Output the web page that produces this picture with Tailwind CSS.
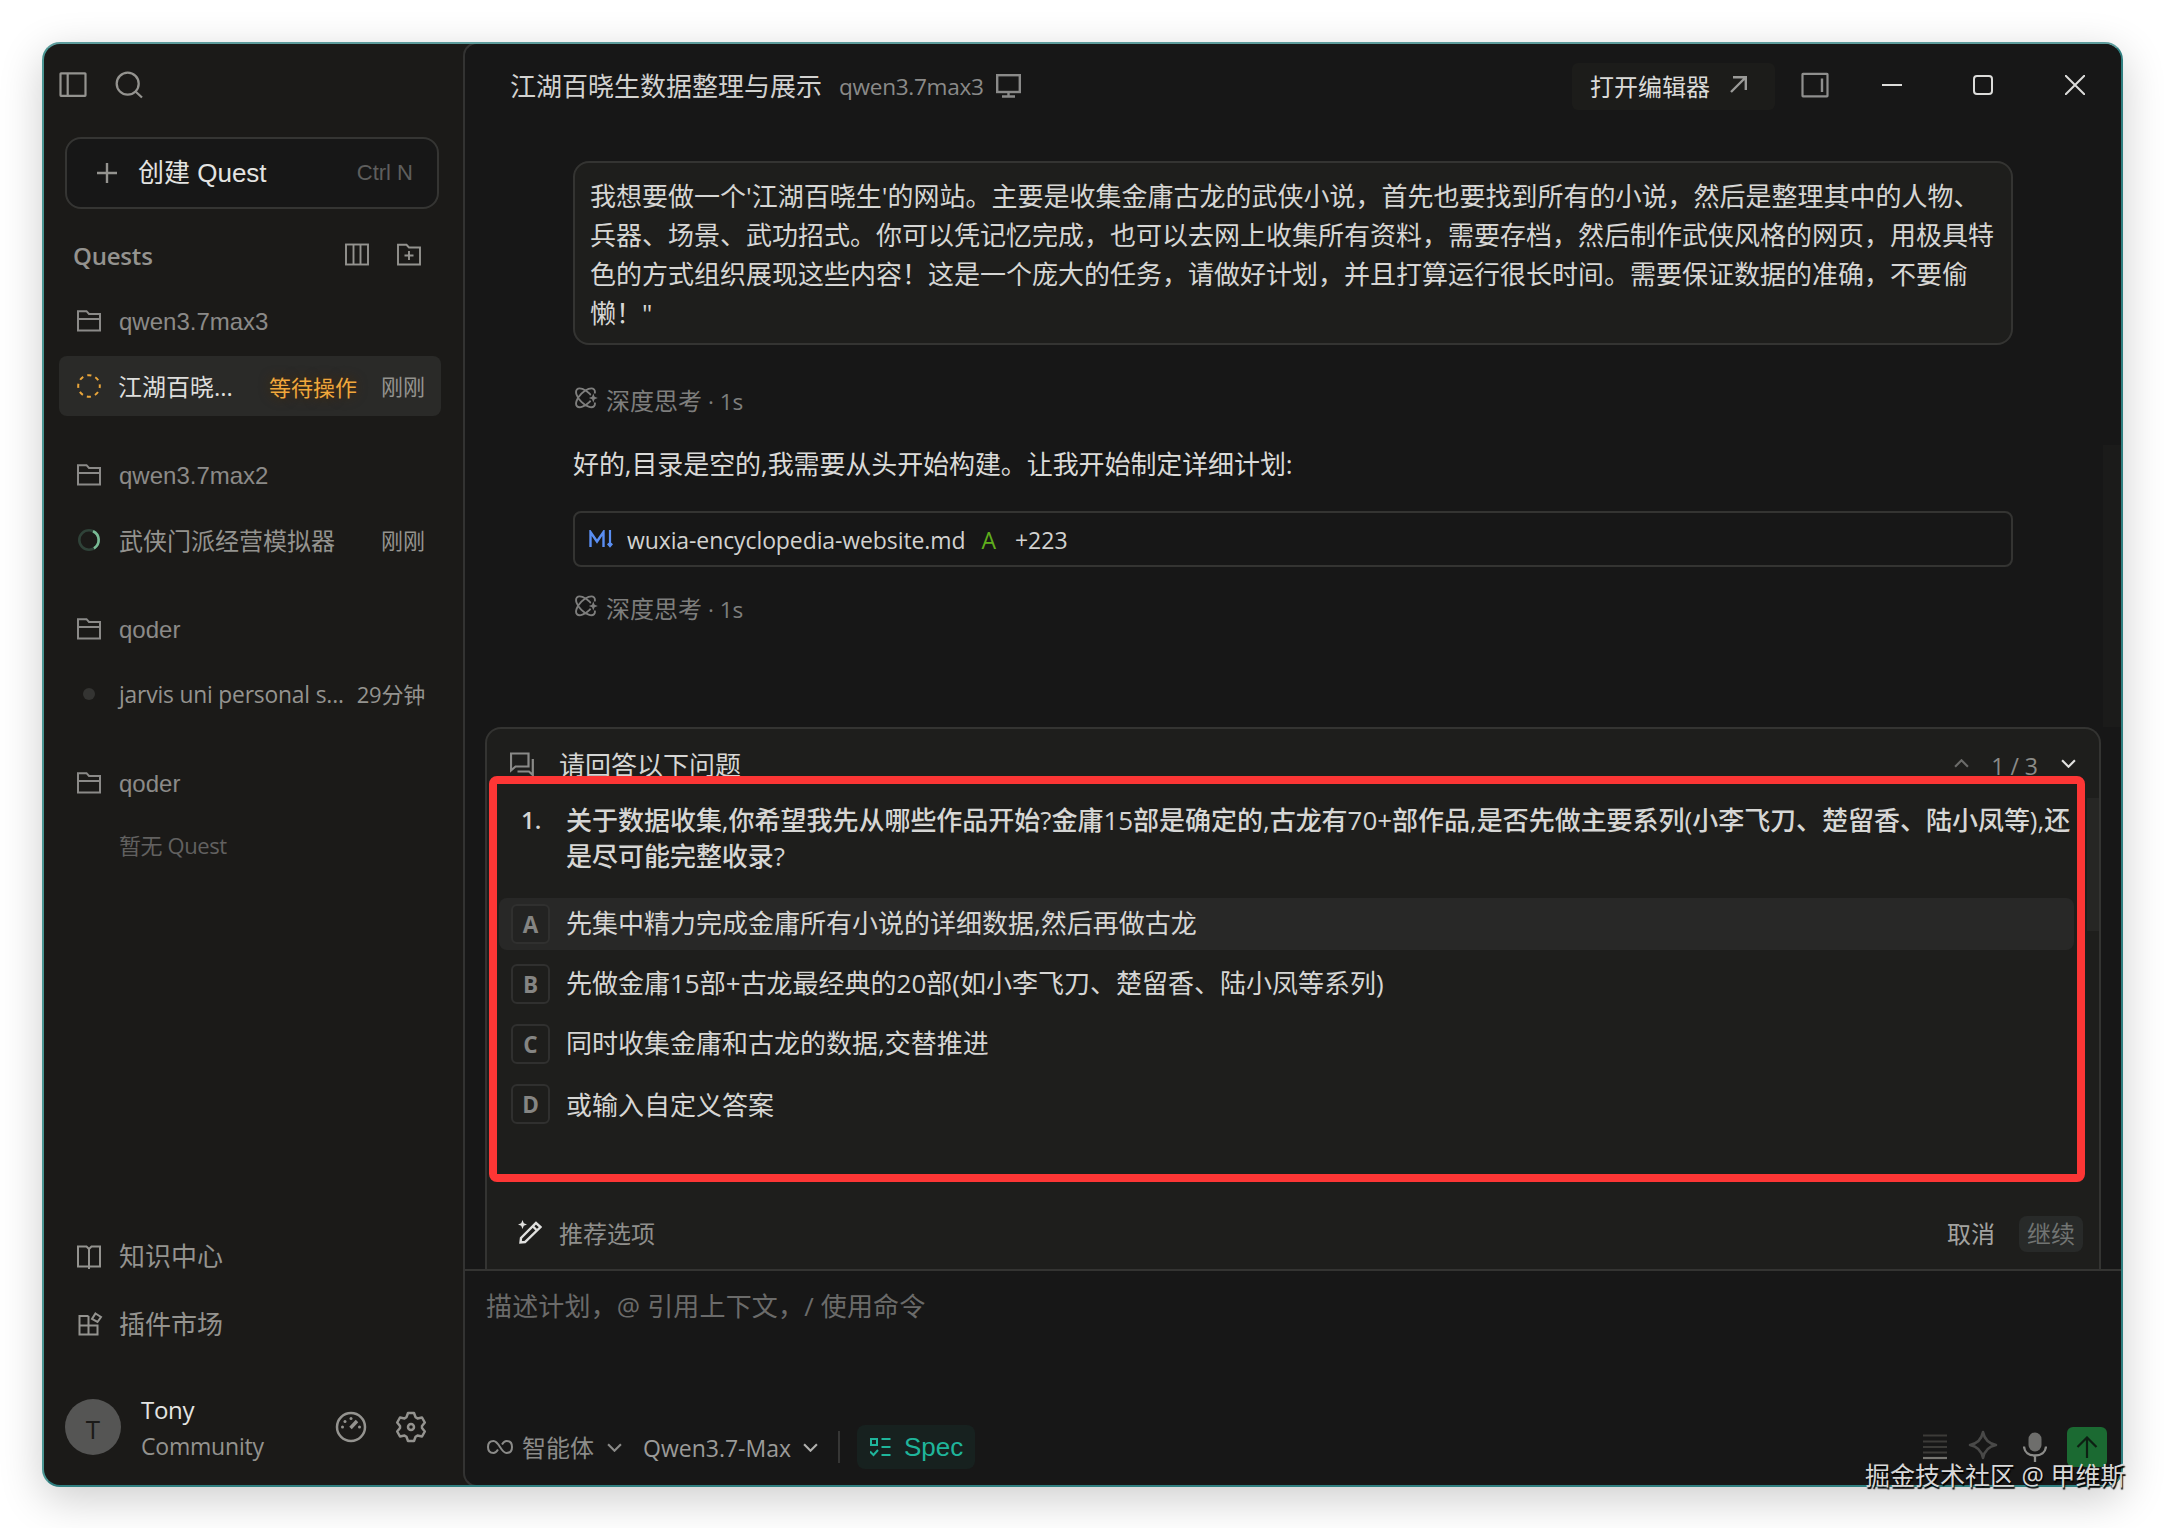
<!DOCTYPE html>
<html lang="zh-CN">
<head>
<meta charset="utf-8">
<title>Quest</title>
<script src="https://cdn.jsdelivr.net/npm/@tailwindcss/browser@4"></script>
</head>
<body class="bg-white overflow-hidden h-screen">
<svg width="0" height="0" class="absolute">
  <defs>
    <clipPath id="orbit"><path d="M-2 -2H24V6.500H17L13.500 11L17 15.500H24V24H-2Z"/></clipPath>
    <symbol id="folder" viewBox="0 0 24 22"><path d="M1 20.500V1.200H9.500L12 4H23V20.500ZM1 9H23" fill="none" stroke="currentColor" stroke-width="2"/></symbol>
    <symbol id="think" viewBox="0 0 23 22"><g clip-path="url(#orbit)" fill="none" stroke="currentColor" stroke-width="1.900"><ellipse cx="10.500" cy="10.800" rx="12" ry="5.800" transform="rotate(45 10.500 10.800)"/><ellipse cx="10.500" cy="10.800" rx="12" ry="5.800" transform="rotate(-45 10.500 10.800)"/></g><path d="M18.300 6.500L19.600 9.700L22.800 11L19.600 12.300L18.300 15.500L17 12.300L13.800 11L17 9.700Z" fill="currentColor"/></symbol>
    <symbol id="down" viewBox="0 0 14 8"><path d="M1 1L7 7L13 1" fill="none" stroke="currentColor" stroke-width="2"/></symbol>
  </defs>
</svg>
<div class="h-full pt-[42px] pl-[42px] font-['Open_Sans','Noto_Sans_CJK_SC',sans-serif] whitespace-nowrap">
  <div class="relative w-[2081px] h-[1445px]">
    <div class="w-full h-full flex rounded-[18px] border-2 border-[#2f7f80] border-t-[#5d9c9c] border-l-[#4b9693] bg-[#1b1a18] overflow-hidden shadow-[0_12px_44px_rgba(0,0,0,0.2)]">

      <aside class="w-[419px] shrink-0 flex flex-col text-[#94938f]">
        <div class="h-[82px] pl-[15px] flex items-center gap-7">
          <svg class="w-7 h-7" viewBox="0 0 28 28" fill="none" stroke="currentColor" stroke-width="2.200"><rect x="1.500" y="2.300" width="25" height="22.500" rx=".5"/><path d="M8.700 3V25"/></svg>
          <svg class="w-7 h-7" viewBox="0 0 28 28" fill="none" stroke="currentColor" stroke-width="2.300"><circle cx="12.700" cy="12.700" r="11"/><path d="M20.500 20.500L27 26.500"/></svg>
        </div>
        <div class="mt-[11px] ml-[21px] w-[374px] h-[72px] rounded-2xl border-2 border-[#353533] bg-[#171717] flex items-center pl-[30px] pr-6 font-['Liberation_Sans','Noto_Sans_CJK_SC',sans-serif]">
          <svg class="w-5 h-5" viewBox="0 0 20 20" stroke="currentColor" stroke-width="2.400"><path d="M0 10H20M10 0V20"/></svg>
          <span class="ml-[21px] text-[26px] text-[#e4e4e2]">创建 Quest</span>
          <span class="ml-auto pb-0.5 text-[22px] text-[#5e5e5d]">Ctrl N</span>
        </div>
        <div class="mt-[26px] h-10 pl-[29px] pr-[42px] flex items-center">
          <span class="pt-0.5 text-[24px] font-semibold tracking-[-0.2px]">Quests</span>
          <svg class="ml-auto w-6 h-6" viewBox="0 0 24 24" fill="none" stroke="currentColor" stroke-width="1.900"><rect x="1" y="1.500" width="22" height="20"/><path d="M8.500 2V21M15.500 2V21"/></svg>
          <svg class="ml-7 w-6 h-6" viewBox="0 0 24 24" fill="none" stroke="currentColor" stroke-width="1.900"><path d="M1 21.500V1.800H9.500L12 4.500H23V21.500ZM12 8V17M7.500 12.500H16.500"/></svg>
        </div>

        <div class="mt-[26px] flex flex-col gap-[39px]">
          <section>
            <div class="h-10 pl-[33px] flex items-center gap-[18px] font-['Liberation_Sans',sans-serif] text-[24px] text-[#8b8a88]"><svg class="w-6 h-[22px]"><use href="#folder"/></svg><span class="pt-0.5">qwen3.7max3</span></div>
            <div class="mt-[15px] ml-[15px] w-[382px] h-[60px] rounded-lg bg-[#2a2a28] flex items-center pl-[18px] pr-4 text-[22px]">
              <svg class="w-6 h-6 shrink-0" viewBox="0 0 24 24"><circle cx="12" cy="12" r="10.800" fill="none" stroke="#e9a53a" stroke-width="2" stroke-dasharray="4.200 4.282" stroke-dashoffset="2.100"/></svg>
              <span class="ml-[17px] pt-0.5 text-[24px] text-[#dededc]">江湖百晓...</span>
              <span class="ml-auto pt-0.5 text-[#f0a73c] [text-shadow:0_0_12px_#4a2a00]">等待操作</span>
              <span class="ml-6 pt-px">刚刚</span>
            </div>
          </section>
          <section>
            <div class="h-10 pl-[33px] flex items-center gap-[18px] font-['Liberation_Sans',sans-serif] text-[24px] text-[#8b8a88]"><svg class="w-6 h-[22px]"><use href="#folder"/></svg><span class="pt-0.5">qwen3.7max2</span></div>
            <div class="mt-[15px] ml-[15px] w-[382px] h-[60px] flex items-center pl-[18px] pr-4 text-[22px]">
              <svg class="w-6 h-6 shrink-0" viewBox="0 0 24 24" fill="none" stroke-width="2.600"><circle cx="12" cy="12" r="9.700" stroke="#2f4238"/><path d="M16 3.200A9.700 9.700 0 0 1 17 20.300" stroke="#79bb95"/></svg>
              <span class="ml-[18px] pt-0.5 text-[24px]">武侠门派经营模拟器</span>
              <span class="ml-auto pt-px">刚刚</span>
            </div>
          </section>
          <section>
            <div class="h-10 pl-[33px] flex items-center gap-[18px] font-['Liberation_Sans',sans-serif] text-[24px] text-[#8b8a88]"><svg class="w-6 h-[22px]"><use href="#folder"/></svg><span class="pt-0.5">qoder</span></div>
            <div class="mt-[15px] ml-[15px] w-[382px] h-[60px] flex items-center pl-[18px] pr-4 text-[22px]">
              <span class="w-6 flex justify-center"><span class="w-3 h-3 rounded-full bg-[#343432]"></span></span>
              <span class="ml-[18px] pt-[3px] text-[22.800px] tracking-[-0.18px]">jarvis uni personal s...</span>
              <span class="ml-auto pt-px tracking-[-0.2px]">29分钟</span>
            </div>
          </section>
          <section>
            <div class="h-10 pl-[33px] flex items-center gap-[18px] font-['Liberation_Sans',sans-serif] text-[24px] text-[#8b8a88]"><svg class="w-6 h-[22px]"><use href="#folder"/></svg><span class="pt-0.5">qoder</span></div>
            <div class="mt-3 ml-[75px] h-[60px] flex items-center text-[22px] tracking-[-0.4px] text-[#626160]">暂无 Quest</div>
          </section>
        </div>

        <div class="mt-auto mb-[55px] pl-[33px] flex flex-col gap-[27px] text-[26px]">
          <div class="h-10 pb-px flex items-center gap-[18px]">
            <svg class="w-6 h-6" viewBox="0 0 24 24" fill="none" stroke="currentColor" stroke-width="2"><path d="M12 24V4L9.500 1.500H1V21.500H23V1.500H14.500L12 4"/></svg>知识中心</div>
          <div class="h-10 flex items-center gap-[18px]">
            <svg class="w-6 h-6 overflow-visible" viewBox="0 0 24 24" fill="none" stroke="currentColor" stroke-width="2"><path d="M11.500 4H2.500V22.500H20.500V13.500H2.500M11.500 4V22.500"/><path d="M18.500 1.500L24 5L20.500 10L15 7Z"/></svg>插件市场</div>
        </div>
        <div class="mb-[30px] pl-[21px] pr-9 h-14 flex items-center">
          <div class="w-14 h-14 rounded-full bg-[#555554] text-[#1b1a18] flex items-center justify-center text-[26px] font-medium pt-1">T</div>
          <div class="ml-5 pt-0.5 text-[23px] leading-[37px]">
            <div class="text-[#e4e4e2] text-[24px] tracking-[-0.3px]">Tony</div>
            <div class="tracking-[-0.2px]">Community</div>
          </div>
          <svg class="ml-auto w-8 h-8" viewBox="0 0 32 32" fill="none" stroke="currentColor" stroke-width="2.500"><circle cx="16" cy="16" r="14"/><path d="M15.500 17L22 10" stroke-width="3.400"/><g fill="currentColor" stroke="none"><circle cx="7.500" cy="16" r="1.500"/><circle cx="10" cy="10.500" r="1.500"/><circle cx="16" cy="7.500" r="1.500"/><circle cx="24.500" cy="16" r="1.500"/></g></svg>
          <svg class="ml-7 w-8 h-8" viewBox="0 0 32 32" fill="none" stroke="currentColor" stroke-width="2.500" stroke-linejoin="round"><path d="M13 2H19L20.500 6.200L22.500 7.400L27 6.500L29.800 11.500L27 15V17L29.800 20.500L27 25.500L22.500 24.600L20.500 25.800L19 30H13L11.500 25.800L9.500 24.600L5 25.500L2.200 20.500L5 17V15L2.200 11.500L5 6.500L9.500 7.400L11.500 6.200Z"/><circle cx="16" cy="16" r="3"/></svg>
        </div>
      </aside>

      <main class="flex-1 min-w-0 -my-0.5 flex flex-col bg-[#171717] rounded-l-[14px] border-l-2 border-y-2 border-[#333332]">
        <header class="h-[84px] shrink-0 pl-[45px] flex items-center text-[#8a8a89]">
          <h1 class="text-[26px] text-[#d2d2d0]">江湖百晓生数据整理与展示</h1>
          <span class="ml-[17px] pt-0.5 text-[22.600px] tracking-[-0.3px]">qwen3.7max3</span>
          <svg class="ml-3 w-[25px] h-6" viewBox="0 0 25 24" fill="none" stroke="currentColor" stroke-width="2.400"><rect x="1.200" y="1.200" width="22.600" height="16.800"/><path d="M12.500 18V22.500M6 22.500H19"/></svg>
          <div class="ml-auto w-[203px] h-[47px] rounded-md bg-[#1c1c1a] flex items-center pl-[18px] text-[24px] text-[#dadad8]"><span class="pt-px">打开编辑器</span>
            <svg class="ml-5 w-[17px] h-[17px] mb-1" viewBox="0 0 17 17" fill="none" stroke="#9a9a98" stroke-width="2.400"><path d="M1 16L15.500 1.500M3 1.200H15.800V14"/></svg>
          </div>
          <svg class="ml-[26px] w-7 h-7 mb-0.5" viewBox="0 0 28 28" fill="none" stroke="#8f8f8e" stroke-width="2.200"><rect x="1.500" y="2.800" width="25" height="22.500" rx=".5"/><path d="M21 7.500V21" stroke-width="2.400"/></svg>
          <svg class="ml-[53px] w-5 h-5 mb-0.5" viewBox="0 0 20 20" stroke="#dcdcda" stroke-width="1.800"><path d="M0 10H20"/></svg>
          <svg class="ml-[71px] w-5 h-5 mb-0.5" viewBox="0 0 20 20" fill="none" stroke="#dcdcda" stroke-width="2"><rect x="1" y="1" width="18" height="18" rx="3"/></svg>
          <svg class="ml-[72px] mr-9 w-5 h-5 mb-0.5" viewBox="0 0 20 20" stroke="#dcdcda" stroke-width="2"><path d="M0 0L20 20M20 0L0 20"/></svg>
        </header>

        <div class="relative flex-1 min-h-0 px-[108px] pt-[33px]">
          <div class="absolute right-0 top-[317px] bottom-0 w-[18px] bg-[#1b1b1a]"></div>
          <div class="h-[184px] rounded-2xl border-2 border-[#343432] bg-[#1e1e1c] pl-[15px] pt-3.500 pt-[14px] text-[26px] leading-[39px] text-[#d6d6d4]">我想要做一个'江湖百晓生'的网站。主要是收集金庸古龙的武侠小说，首先也要找到所有的小说，然后是整理其中的人物、<br>兵器、场景、武功招式。你可以凭记忆完成，也可以去网上收集所有资料，需要存档，然后制作武侠风格的网页，用极具特<br>色的方式组织展现这些内容！这是一个庞大的任务，请做好计划，并且打算运行很长时间。需要保证数据的准确，不要偷<br>懒！"</div>
          <div class="mt-[35px] h-10 flex items-center text-[24px] text-[#7e7e7d]"><svg class="ml-0.5 mr-[8px] mb-1 w-[23px] h-[22px]"><use href="#think"/></svg><span class="pt-px">深度思考<span class="ml-1.5 text-[22.500px]">· 1s</span></span></div>
          <p class="mt-6 mb-[27px] h-10 leading-[40px] text-[26px] tracking-[-0.09px] text-[#dadad8]">好的,目录是空的,我需要从头开始构建。让我开始制定详细计划:</p>
          <div class="h-14 rounded-lg border-2 border-[#343432] flex items-center pl-[14px] text-[23px] text-[#d2d2d0]">
            <svg class="w-6 h-[18px]" viewBox="0 0 24 18" fill="none" stroke="#5a8ef2" stroke-width="2.400"><path d="M1.500 17V2L8 11.500L14.500 2V17"/><path d="M21 0V16M18.800 13.500L21 16L23.200 13.500" stroke-width="2.200"/></svg>
            <span class="ml-[14px] pt-0.5 tracking-[-0.1px]">wuxia-encyclopedia-website.md</span>
            <span class="ml-4 pt-0.5 text-[#5fae1c]">A</span>
            <span class="ml-[19px] pt-0.5">+223</span>
          </div>
          <div class="mt-[21px] h-10 flex items-center text-[24px] text-[#7e7e7d]"><svg class="ml-0.5 mr-[8px] mb-1 w-[23px] h-[22px]"><use href="#think"/></svg><span class="pt-px">深度思考<span class="ml-1.5 text-[22.500px]">· 1s</span></span></div>
        </div>

        <section class="relative h-[542px] shrink-0 mx-5 flex flex-col rounded-t-2xl border-2 border-b-0 border-[#343432] bg-[#1e1e1c] text-[26px] text-[#d6d6d4]">
          <div class="absolute right-0 top-[69px] w-3 h-[133px] bg-[#262624]"></div>
          <div class="h-[73px] shrink-0 pl-[23px] pr-[23px] flex items-center">
            <svg class="w-6 h-6 mb-1" viewBox="0 0 24 24" fill="none" stroke="#8a8a88" stroke-width="2.200"><path d="M1 18.500V1.500H18.500V14.500H5.500Z"/><path d="M22.800 7V23L19 19.500H7.500"/></svg>
            <span class="ml-[25px]">请回答以下问题</span>
            <svg class="ml-auto w-[15px] h-[9px] rotate-180 mb-1 text-[#6b6b69]"><use href="#down"/></svg>
            <span class="ml-[22px] pt-0.5 text-[23px] text-[#8b8b88]">1 / 3</span>
            <svg class="ml-[23px] mb-1 w-[15px] h-[9px] text-[#e2e2e0]"><use href="#down"/></svg>
          </div>
          <div class="flex leading-[36px] font-medium">
            <span class="w-[79px] pl-[34px] text-[24px] font-semibold">1.</span>
            <p class="tracking-[-0.025px]">关于数据收集,你希望我先从哪些作品开始?金庸15部是确定的,古龙有70+部作品,是否先做主要系列(小李飞刀、楚留香、陆小凤等),还<br>是尽可能完整收录?</p>
          </div>
          <ul class="mt-6 ml-3 w-[1575px] flex flex-col gap-2">
            <li class="h-[52px] rounded-lg bg-[#282827] pl-3 flex items-center gap-4"><span class="w-[39px] h-10 shrink-0 rounded-md border-2 border-[#30302f] bg-[#232322] flex items-center justify-center text-[22.500px] font-bold text-[#858583] pt-0.5">A</span><span class="pb-0.5">先集中精力完成金庸所有小说的详细数据,然后再做古龙</span></li>
            <li class="h-[52px] pl-3 flex items-center gap-4"><span class="w-[39px] h-10 shrink-0 rounded-md border-2 border-[#30302f] flex items-center justify-center text-[22.500px] font-bold text-[#858583] pt-0.5">B</span><span class="pb-0.5">先做金庸15部+古龙最经典的20部(如小李飞刀、楚留香、陆小凤等系列)</span></li>
            <li class="h-[52px] pl-3 flex items-center gap-4"><span class="w-[39px] h-10 shrink-0 rounded-md border-2 border-[#30302f] flex items-center justify-center text-[22.500px] font-bold text-[#858583] pt-0.5">C</span><span class="pb-0.5">同时收集金庸和古龙的数据,交替推进</span></li>
            <li class="h-[52px] pl-3 flex items-center gap-4"><span class="w-[39px] h-10 shrink-0 rounded-md border-2 border-[#30302f] flex items-center justify-center text-[22.500px] font-bold text-[#858583] pt-0.5">D</span><span class="pt-0.5">或输入自定义答案</span></li>
          </ul>
          <div class="mt-auto mb-[17px] pl-[31px] pr-4 h-9 flex items-center text-[24px] text-[#8f8f8c]">
            <svg class="w-6 h-6 mb-1" viewBox="0 0 24 24" fill="none" stroke="#e0e0de" stroke-width="2.400"><path d="M2.500 22.500L3 18L18 3L22.500 7L7 22Z"/><path d="M15 6.500L18.500 10"/><path d="M4.500 0L5.800 3.200L9 4.500L5.800 5.800L4.500 9L3.200 5.800L0 4.500L3.200 3.200Z" fill="#e0e0de" stroke="none"/></svg>
            <span class="ml-[17px]">推荐选项</span>
            <span class="ml-auto text-[#a3a3a0]">取消</span>
            <span class="ml-6 w-16 h-9 rounded-lg bg-[#282a29] text-[#717472] flex items-center justify-center">继续</span>
          </div>
          <div class="absolute left-[2px] top-[47px] w-[1596px] h-[406px] border-8 border-[#fd3635] rounded-lg"></div>
        </section>

        <footer class="h-[216px] shrink-0 border-t-2 border-[#343432] flex flex-col pl-[21px] pr-[14px]">
          <div class="mt-[15px] h-10 leading-[40px] text-[26px] tracking-[0.16px] text-[#6b6b6a]">描述计划，@ 引用上下文，/ 使用命令</div>
          <div class="mt-auto mb-[16px] h-[44px] flex items-center text-[24px] text-[#8b8b89]">
            <svg class="ml-px w-[26px] h-[14px]" viewBox="0 0 26 14" fill="none" stroke="currentColor" stroke-width="2"><path d="M11 9.500C9.500 12 8.500 13 6.500 13C3 13 1 10.500 1 7C1 3.500 3 1 6.500 1C12 1 14 13 19.500 13C23 13 25 10.500 25 7C25 3.500 23 1 19.500 1C17.500 1 16.500 2 15 4.500"/></svg>
            <span class="ml-[9px] pt-px">智能体</span>
            <svg class="ml-[13px] w-[15px] h-[9px]"><use href="#down"/></svg>
            <span class="ml-[21px] pt-0.5 text-[23px] text-[#9b9b99]">Qwen3.7-Max</span>
            <svg class="ml-3 w-[15px] h-[9px] text-[#b0b0ae]"><use href="#down"/></svg>
            <span class="ml-5 w-0.5 h-8 bg-[#363635]"></span>
            <span class="ml-[17px] w-[118px] h-[44px] rounded-lg bg-[#17211f] text-[#1fb59b] flex items-center pl-[13px] font-['Liberation_Sans',sans-serif] text-[26px]">
              <svg class="mr-[13px] w-[21px] h-[20px]" viewBox="0 0 21 20" fill="none" stroke="currentColor" stroke-width="2"><rect x="1" y="2" width="6" height="6"/><path d="M0 14.500L3.500 18L8 13M11.500 2H20.500M11.500 10H20.500M11.500 18H20.500"/></svg>Spec</span>
            <svg class="ml-auto w-6 h-[26px]" viewBox="0 0 24 26" stroke="#3c3b38" stroke-width="1.800"><path d="M0 1.500H24M0 7.500H24M0 13H24M0 18.500H24"/><path d="M0 24H24" stroke="#777672" stroke-width="2.200"/></svg>
            <svg class="ml-[21px] mb-1 w-[30px] h-[30px]" viewBox="0 0 30 30" fill="none" stroke="#494948" stroke-width="2.600" stroke-linejoin="round"><path d="M15 2C16.500 9.500 20.500 13.500 28 15C20.500 16.500 16.500 20.500 15 28C13.500 20.500 9.500 16.500 2 15C9.500 13.500 13.500 9.500 15 2Z"/></svg>
            <svg class="ml-[25px] w-6 h-[30px]" viewBox="0 0 24 30" fill="none" stroke="#8c8c8a" stroke-width="2.300"><rect x="5.500" y=".5" width="13" height="19" rx="6.500" fill="#6e6e6c" stroke="none"/><path d="M1 14.500C1.500 20.500 6 23.500 12 23.500S22.500 20.500 23 14.500M12 23.500V30"/></svg>
            <span class="ml-5 w-10 h-10 rounded-[6px] bg-[#1b6a32] flex items-center justify-center"><svg class="w-[22px] h-[22px]" viewBox="0 0 22 22" fill="none" stroke="#0d2013" stroke-width="2.200"><path d="M11 22V2M1.500 11L11 1.500L20.500 11"/></svg></span>
          </div>
        </footer>
      </main>
    </div>
    <div class="absolute left-[1823px] top-[1413px] leading-[40px] text-[25px] text-[#d8d8d8] [text-shadow:1px_2px_1px_#000]">掘金技术社区 @ 甲维斯</div>
  </div>
</div>
</body>
</html>
